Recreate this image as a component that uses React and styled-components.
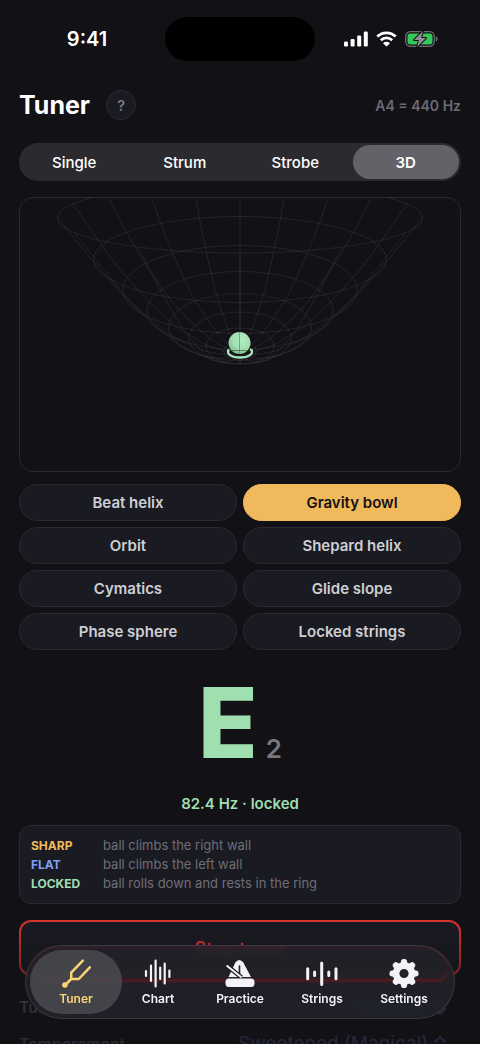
import styled, { createGlobalStyle } from "styled-components";

const GlobalStyle = createGlobalStyle`
  * {
    box-sizing: border-box;
  }

  body {
    margin: 0;
    background: #121116;
    color: #ffffff;
    font-family: Inter, "Liberation Sans", sans-serif;
  }

  button,
  select {
    font-family: inherit;
  }
`;

const Screen = styled.div`
  position: relative;
  height: 100vh;
  overflow: hidden;
`;

const Content = styled.main`
  height: 100%;
  padding: 0 19px;
  overflow-y: auto;
  scrollbar-width: none;
`;

const StatusBar = styled.div`
  display: grid;
  grid-template-columns: 1fr 150px 1fr;
  align-items: center;
  height: 78px;
`;

const Clock = styled.span`
  padding-right: 10px;
  font-size: 20px;
  font-weight: 600;
  text-align: center;
`;

const Island = styled.div`
  height: 44px;
  border-radius: 22px;
  background: #000000;
`;

const StatusIcons = styled.div`
  display: flex;
  justify-content: center;
  align-items: center;
  gap: 8px;
  padding-left: 6px;
`;

const Header = styled.header`
  display: flex;
  align-items: center;
  height: 54px;
`;

const Title = styled.h1`
  margin: 0 16px 0 0;
  font-size: 25px;
  font-weight: 700;
`;

const HelpButton = styled.button`
  width: 30px;
  height: 30px;
  padding: 0;
  border: 1px solid #2a2a31;
  border-radius: 50%;
  background: #1a1a23;
  color: #77777f;
  font-size: 15px;
  font-weight: 600;
`;

const Reference = styled.span`
  margin-left: auto;
  color: #6b6a72;
  font-size: 14px;
  font-weight: 600;
`;

const Segments = styled.div`
  display: flex;
  gap: 4px;
  height: 38px;
  margin-top: 11px;
  padding: 2px;
  border-radius: 19px;
  background: #2a2a2f;
`;

const Segment = styled.button`
  flex: 1;
  padding: 0;
  border: 0;
  border-radius: 17px;
  background: ${(props) => (props.$active ? "#636269" : "transparent")};
  color: #ffffff;
  font-size: 15px;
  font-weight: ${(props) => (props.$active ? 600 : 500)};
`;

const Stage = styled.div`
  height: 275px;
  margin-top: 16px;
  border: 1px solid #2a2a2f;
  border-radius: 14px;
  overflow: hidden;

  svg {
    display: block;
    width: 100%;
    height: 100%;
  }
`;

const Modes = styled.div`
  display: grid;
  grid-template-columns: 1fr 1fr;
  gap: 6px;
  margin-top: 12px;
`;

const ModeButton = styled.button`
  height: 37px;
  padding: 0;
  border: 1px solid ${(props) => (props.$active ? "#f0b95b" : "#2a2a31")};
  border-radius: 19px;
  background: ${(props) => (props.$active ? "#f0b95b" : "#1a1a23")};
  color: ${(props) => (props.$active ? "#121116" : "#cfcfd2")};
  font-size: 15px;
  font-weight: 600;
`;

const Note = styled.div`
  display: flex;
  justify-content: center;
  align-items: baseline;
  gap: 8px;
  margin-top: 24px;
  color: #a0dfb0;
  font-size: 98px;
  font-weight: 800;
  line-height: 98px;
`;

const Octave = styled.span`
  color: #77777f;
  font-size: 26px;
  font-weight: 600;
  line-height: 26px;
`;

const Reading = styled.p`
  margin: 22px 0 0;
  color: #a0dfb0;
  font-size: 15px;
  font-weight: 600;
  line-height: 20px;
  text-align: center;
`;

const Legend = styled.dl`
  display: grid;
  grid-template-columns: 72px 1fr;
  margin: 11px 0 0;
  padding: 10px 11px;
  border: 1px solid #2a2a31;
  border-radius: 12px;
  background: #1a1a22;
  line-height: 19px;
`;

const LegendTerm = styled.dt`
  color: ${(props) => props.$color};
  font-size: 12px;
  font-weight: 700;
`;

const LegendText = styled.dd`
  margin: 0;
  color: #6f6e76;
  font-size: 13px;
`;

const StopButton = styled.button`
  width: 100%;
  height: 56px;
  margin-top: 16px;
  padding: 0;
  border: 2px solid #e0352e;
  border-radius: 12px;
  background: #1a1a22;
  color: #e0352e;
  font-size: 18px;
  font-weight: 600;
`;

const Settings = styled.div`
  margin-top: 12px;
`;

const Setting = styled.label`
  display: flex;
  justify-content: space-between;
  align-items: center;
  height: 37px;
  color: #9a9aa2;
  font-size: 16px;
  font-weight: 500;
`;

const Picker = styled.span`
  display: flex;
  align-items: center;
  gap: 4px;
  margin-right: 14px;
  color: #6f8fe0;
`;

const PickerSelect = styled.select`
  appearance: none;
  padding: 0;
  border: 0;
  background: transparent;
  color: inherit;
  font-size: ${(props) => (props.$large ? 19 : 16)}px;
  font-weight: ${(props) => (props.$large ? 400 : 600)};
`;

const Fade = styled.div`
  position: absolute;
  right: 0;
  bottom: 0;
  left: 0;
  height: 128px;
  background: linear-gradient(
    rgba(18, 17, 22, 0),
    rgba(18, 17, 22, 0.76) 70%,
    rgba(18, 17, 22, 0.82)
  );
  pointer-events: none;
`;

const TabBar = styled.nav`
  position: absolute;
  right: 25px;
  bottom: 25px;
  left: 25px;
  display: flex;
  height: 74px;
  padding: 4px;
  border: 1px solid;
  border-color: #3a3c48 #42343e #46323c #3a3440;
  border-radius: 37px;
  background: rgba(33, 34, 41, 0.9);
  backdrop-filter: blur(2px);

  &::before {
    content: "";
    position: absolute;
    top: 1px;
    right: 6px;
    left: 6px;
    height: 31px;
    border: 1px solid rgba(170, 20, 30, 0.3);
    border-bottom: 3px solid rgba(150, 20, 30, 0.45);
    border-radius: 31px 31px 14px 14px;
    filter: blur(1px);
  }
`;

const Tab = styled.button`
  position: relative;
  display: flex;
  flex: 1;
  flex-direction: column;
  align-items: center;
  gap: 4px;
  padding: 8px 0 0;
  border: 0;
  border-radius: 32px;
  background: ${(props) =>
    props.$active ? "rgba(76, 77, 83, 0.8)" : "transparent"};
  color: ${(props) => (props.$active ? "#fcd475" : "#f3f2f8")};
  font-size: 12px;
  font-weight: 600;
  line-height: 14px;

  & + & {
    margin-left: -10px;
  }
`;

// rings of the bowl from the rim inwards: centre height, radii, perspective
const RINGS = [
  { y: 218, rx: 182.5, ry: 35, k: 0.406 },
  { y: 259.5, rx: 146.5, ry: 43, k: 0.33 },
  { y: 289.5, rx: 117.5, ry: 44, k: 0.27 },
  { y: 310.5, rx: 93, ry: 39, k: 0.22 },
  { y: 327, rx: 71.5, ry: 33.5, k: 0.17 },
  { y: 338, rx: 51.5, ry: 26, k: 0.125 },
  { y: 346, rx: 34, ry: 18, k: 0.083 },
  { y: 351, rx: 16.5, ry: 9, k: 0.04 },
];

const meridian = (step) => {
  const half = (step * Math.PI) / 16;
  const pts = RINGS.map(({ y, rx, ry, k }) => {
    const t =
      2 *
      Math.atan2(
        Math.sqrt((1 - k) / (1 + k)) * Math.sin(half),
        Math.cos(half)
      );
    return [240 + rx * Math.sin(t), y - ry * Math.cos(t)];
  });
  pts.push([240, 352]);

  let d = `M${pts[0].join(" ")}`;
  for (let i = 0; i < pts.length - 1; i++) {
    const p0 = pts[i - 1] || pts[i];
    const [p1, p2] = [pts[i], pts[i + 1]];
    const p3 = pts[i + 2] || p2;
    d += `C${p1[0] + (p2[0] - p0[0]) / 6} ${p1[1] + (p2[1] - p0[1]) / 6} `;
    d += `${p2[0] - (p3[0] - p1[0]) / 6} ${p2[1] - (p3[1] - p1[1]) / 6} `;
    d += `${p2[0]} ${p2[1]}`;
  }
  return d;
};

const GravityBowl = () => (
  <svg viewBox="20 198 440 273" role="img" aria-label="Gravity bowl">
    <defs>
      <radialGradient id="ball" cx="0.6" cy="0.35" r="0.7">
        <stop offset="0" stopColor="#b0efc1" />
        <stop offset="0.6" stopColor="#a0dfb0" />
        <stop offset="1" stopColor="#83bd93" />
      </radialGradient>
    </defs>
    <g fill="none" stroke="#8c8c94" strokeOpacity="0.15">
      {RINGS.map((ring) => (
        <ellipse
          key={ring.y}
          cx="240"
          cy={ring.y}
          rx={ring.rx}
          ry={ring.ry}
        />
      ))}
      {Array.from({ length: 16 }, (_, i) => (
        <path key={i} d={meridian(i)} />
      ))}
    </g>
    <ellipse
      cx="240"
      cy="352"
      rx="12"
      ry="5.5"
      fill="none"
      stroke="#a6e6b6"
      strokeWidth="2"
    />
    <circle cx="239.5" cy="343" r="12" fill="#121116" />
    <path
      d="M228.6 349.5q-1.200 1.200-.600 3.200c1 3 6 4.800 12 4.800s11-1.800 12-4.800q.600-2-.600-3.200"
      fill="none"
      stroke="#a6e6b6"
      strokeWidth="2"
    />
    <circle cx="239.5" cy="343" r="11" fill="url(#ball)" />
    <path d="M239.5 332v22" stroke="#3f6b4c" strokeOpacity="0.5" />
    <path d="M232 350.5h15" stroke="#2c4a36" strokeOpacity="0.6" />
  </svg>
);

const SignalIcon = () => (
  <svg width="24" height="16" viewBox="0 0 24 16" fill="#ffffff">
    <rect x="0" y="10.5" width="4" height="5" rx="1.200" />
    <rect x="6.600" y="8" width="4" height="7.500" rx="1.200" />
    <rect x="13.200" y="4.500" width="4" height="11" rx="1.200" />
    <rect x="19.800" y="0.500" width="4" height="15" rx="1.200" />
  </svg>
);

const WifiIcon = () => (
  <svg width="21" height="16" viewBox="0 0 21 16" fill="none">
    <g stroke="#ffffff" strokeWidth="2.800">
      <path d="M1.300 5.600a13 13 0 0 1 18.400 0" />
      <path d="M4.800 9.200a8.200 8.200 0 0 1 11.400 0" />
    </g>
    <path d="M10.500 15.600L7 12.200a5 5 0 0 1 7 0z" fill="#ffffff" />
  </svg>
);

const BatteryIcon = () => (
  <svg width="33" height="18" viewBox="0 0 33 18">
    <rect
      x="0.700"
      y="1.700"
      width="28.600"
      height="14.600"
      rx="4.700"
      fill="none"
      stroke="#6b6b70"
      strokeWidth="1.300"
    />
    <path d="M30.800 6.300q2 .900 2 2.700t-2 2.700z" fill="#6b6b70" />
    <rect x="2.500" y="3.500" width="25" height="11" rx="3" fill="#34c759" />
    <path
      d="M17.800 1.200L9 9.900h4.800l-1.600 6.900 8.800-8.700h-4.800z"
      fill="#8f8f93"
      stroke="#121116"
      strokeWidth="2"
      strokeLinejoin="round"
      paintOrder="stroke"
    />
  </svg>
);

const TuningForkIcon = () => (
  <svg width="30" height="30" viewBox="0 0 30 30" fill="none">
    <path
      d="M21.800 2.700L10.200 14.700V21h7.600L28.800 9.300M10.200 21l-6 6"
      stroke="currentColor"
      strokeWidth="2.500"
      strokeLinecap="round"
      strokeLinejoin="round"
    />
    <circle cx="3.900" cy="27" r="2.800" fill="currentColor" />
  </svg>
);

const WaveformIcon = () => (
  <svg width="30" height="30" viewBox="0 0 30 30">
    <path
      d="M3 13v5M8 7.500v15.500M12.600 2.500v26M17.200 9.500v11.500M21.700 5.500v20M26.400 12.500v6.500"
      stroke="currentColor"
      strokeWidth="2.200"
      strokeLinecap="round"
    />
  </svg>
);

const MetronomeIcon = () => (
  <svg width="30" height="30" viewBox="0 0 30 30">
    <path
      d="M3.500 19L10.300 4.600q4-5.400 8 0L26 19z"
      fill="currentColor"
    />
    <path
      d="M14.500 8v8"
      stroke="#202128"
      strokeWidth="1.600"
      strokeLinecap="round"
    />
    <path d="M1 7L16.600 19.500" stroke="#202128" strokeWidth="4.400" />
    <path
      d="M2.200 8L16 19"
      stroke="currentColor"
      strokeWidth="2"
      strokeLinecap="round"
    />
    <rect
      x="0.500"
      y="20.500"
      width="29"
      height="8.500"
      rx="3.500"
      fill="currentColor"
    />
  </svg>
);

const StringsIcon = () => (
  <svg width="32" height="30" viewBox="0 0 32 30">
    <path
      d="M1.700 10.700v10M8.600 14v3.500M15.700 5v21.500M22.800 14v3.500M30 10.700v10"
      stroke="currentColor"
      strokeWidth="3"
      strokeLinecap="round"
    />
  </svg>
);

const GearIcon = () => (
  <svg width="30" height="30" viewBox="0 0 30 30">
    <circle
      cx="15"
      cy="15.500"
      r="7.900"
      fill="none"
      stroke="currentColor"
      strokeWidth="6.600"
    />
    {[0, 45, 90, 135, 180, 225, 270, 315].map((angle) => (
      <path
        key={angle}
        d="M11.400 6L12.200 2.500q.500-1.500 2-1.500h1.600q1.500 0 2 1.500L18.600 6z"
        transform={`rotate(${angle} 15 15.500)`}
        fill="currentColor"
      />
    ))}
  </svg>
);

const ChevronIcon = () => (
  <svg width="14" height="20" viewBox="0 0 14 20" fill="none">
    <path
      d="M2 8l5-5 5 5M2 12l5 5 5-5"
      stroke="currentColor"
      strokeWidth="1.800"
      strokeLinecap="round"
    />
  </svg>
);

const VIEWS = ["Single", "Strum", "Strobe", "3D"];

const MODES = [
  "Beat helix",
  "Gravity bowl",
  "Orbit",
  "Shepard helix",
  "Cymatics",
  "Glide slope",
  "Phase sphere",
  "Locked strings",
];

const LEGEND = [
  { term: "SHARP", color: "#f0b95b", text: "ball climbs the right wall" },
  { term: "FLAT", color: "#7c9ff5", text: "ball climbs the left wall" },
  {
    term: "LOCKED",
    color: "#a0dfb0",
    text: "ball rolls down and rests in the ring",
  },
];

const SETTINGS = [
  { id: "tuning", label: "Tuning", value: "Chromatic" },
  {
    id: "temperament",
    label: "Temperament",
    value: "Sweetened (Magical)",
    large: true,
  },
];

const TABS = [
  { label: "Tuner", Icon: TuningForkIcon },
  { label: "Chart", Icon: WaveformIcon },
  { label: "Practice", Icon: MetronomeIcon },
  { label: "Strings", Icon: StringsIcon },
  { label: "Settings", Icon: GearIcon },
];

const App = () => {
  return (
    <Screen>
      <GlobalStyle />
      <Content>
        <StatusBar>
          <Clock>9:41</Clock>
          <Island />
          <StatusIcons>
            <SignalIcon />
            <WifiIcon />
            <BatteryIcon />
          </StatusIcons>
        </StatusBar>

        <Header>
          <Title>Tuner</Title>
          <HelpButton aria-label="Help">?</HelpButton>
          <Reference>A4 = 440 Hz</Reference>
        </Header>

        <Segments>
          {VIEWS.map((view) => (
            <Segment key={view} $active={view === "3D"}>
              {view}
            </Segment>
          ))}
        </Segments>

        <Stage>
          <GravityBowl />
        </Stage>

        <Modes>
          {MODES.map((mode) => (
            <ModeButton key={mode} $active={mode === "Gravity bowl"}>
              {mode}
            </ModeButton>
          ))}
        </Modes>

        <Note>
          E<Octave>2</Octave>
        </Note>
        <Reading>82.4 Hz · locked</Reading>

        <Legend>
          {LEGEND.map(({ term, color, text }) => [
            <LegendTerm key={term} $color={color}>
              {term}
            </LegendTerm>,
            <LegendText key={text}>{text}</LegendText>,
          ])}
        </Legend>

        <StopButton>Stop tuner</StopButton>

        <Settings>
          {SETTINGS.map(({ id, label, value, large }) => (
            <Setting key={id} htmlFor={id}>
              {label}
              <Picker>
                <PickerSelect id={id} defaultValue={value} $large={large}>
                  <option>{value}</option>
                </PickerSelect>
                <ChevronIcon />
              </Picker>
            </Setting>
          ))}
        </Settings>
      </Content>

      <Fade />
      <TabBar>
        {TABS.map(({ label, Icon }) => (
          <Tab key={label} $active={label === "Tuner"}>
            <Icon />
            {label}
          </Tab>
        ))}
      </TabBar>
    </Screen>
  );
};

export default App;
